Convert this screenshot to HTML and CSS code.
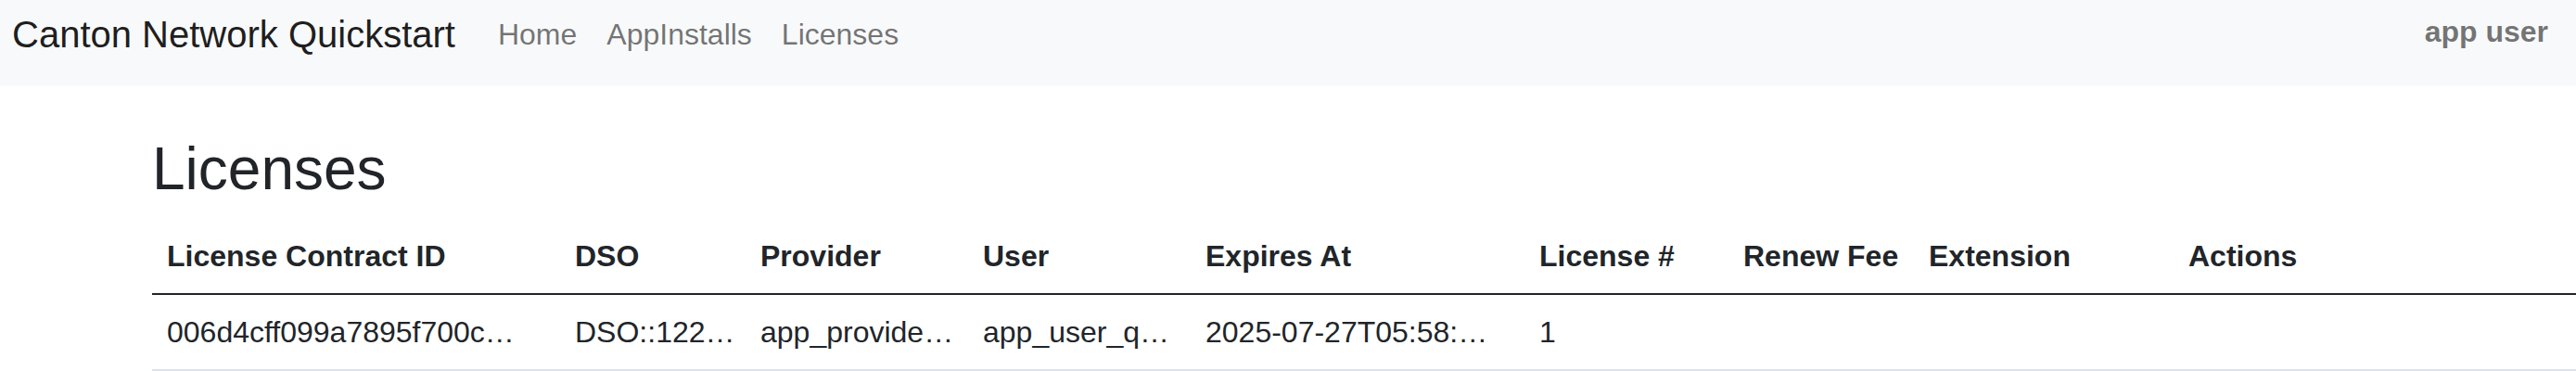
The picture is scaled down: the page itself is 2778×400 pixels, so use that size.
FILE: index.html
```html
<!DOCTYPE html>
<html lang="en">
<head>
    <meta charset="UTF-8">
    <meta name="viewport" content="width=device-width, initial-scale=1.0">
    <title>Canton Network Quickstart</title>
    <link rel="stylesheet" href="styles.css">
</head>
<body>
    <nav class="navbar">
        <a class="brand" href="#">Canton Network Quickstart</a>
        <ul class="nav-links">
            <li><a href="#">Home</a></li>
            <li><a href="#">AppInstalls</a></li>
            <li><a href="#">Licenses</a></li>
        </ul>
        <span class="user-name">app user</span>
    </nav>

    <main class="content">
        <h2 class="page-title">Licenses</h2>
        <table class="licenses-table">
            <colgroup>
                <col class="col-id">
                <col class="col-dso">
                <col class="col-party">
                <col class="col-party">
                <col class="col-expires">
                <col class="col-number">
                <col class="col-fee">
                <col class="col-extension">
                <col>
            </colgroup>
            <thead>
                <tr>
                    <th>License Contract ID</th>
                    <th>DSO</th>
                    <th>Provider</th>
                    <th>User</th>
                    <th>Expires At</th>
                    <th>License #</th>
                    <th>Renew Fee</th>
                    <th>Extension</th>
                    <th>Actions</th>
                </tr>
            </thead>
            <tbody>
                <tr>
                    <td>006d4cff099a7895f700c…</td>
                    <td>DSO::122…</td>
                    <td>app_provide…</td>
                    <td>app_user_q…</td>
                    <td>2025-07-27T05:58:…</td>
                    <td>1</td>
                    <td></td>
                    <td></td>
                    <td></td>
                </tr>
            </tbody>
        </table>
    </main>
</body>
</html>
```

FILE: styles.css
```css
body {
    margin: 0;
    font-family: "Liberation Sans", Arial, sans-serif;
    font-size: 32px;
    line-height: 1.5;
    color: #212529;
    background-color: #fff;
}
.navbar {
    display: flex;
    align-items: center;
    padding: 7px 30px 26px 13px;
    background-color: #f8f9fa;
}
.brand {
    font-size: 40px;
    color: rgba(0, 0, 0, 0.9);
    text-decoration: none;
    margin-right: 30px;
}
.nav-links {
    display: flex;
    flex: 1;
    list-style: none;
    margin: 0;
    padding: 0;
}
.nav-links a {
    display: block;
    padding: 0 16px;
    color: rgba(0, 0, 0, 0.55);
    text-decoration: none;
}
.user-name {
    font-weight: bold;
    color: rgba(0, 0, 0, 0.55);
    margin-bottom: 6px;
}
.content {
    padding: 51px 0 0 164px;
}
.page-title {
    font-size: 64px;
    font-weight: normal;
    line-height: 1.2;
    margin: 0 0 15px;
}
.licenses-table {
    width: 100%;
    border-collapse: collapse;
    table-layout: fixed;
}
.licenses-table th,
.licenses-table td {
    padding: 16px;
    text-align: left;
    white-space: nowrap;
}
.licenses-table th {
    font-weight: bold;
    border-bottom: 2px solid #212529;
}
.licenses-table td {
    border-bottom: 2px solid #dee2e6;
}
.col-id {
    width: 440px;
}
.col-dso {
    width: 200px;
}
.col-party {
    width: 240px;
}
.col-expires {
    width: 360px;
}
.col-number {
    width: 220px;
}
.col-fee {
    width: 200px;
}
.col-extension {
    width: 280px;
}
```
